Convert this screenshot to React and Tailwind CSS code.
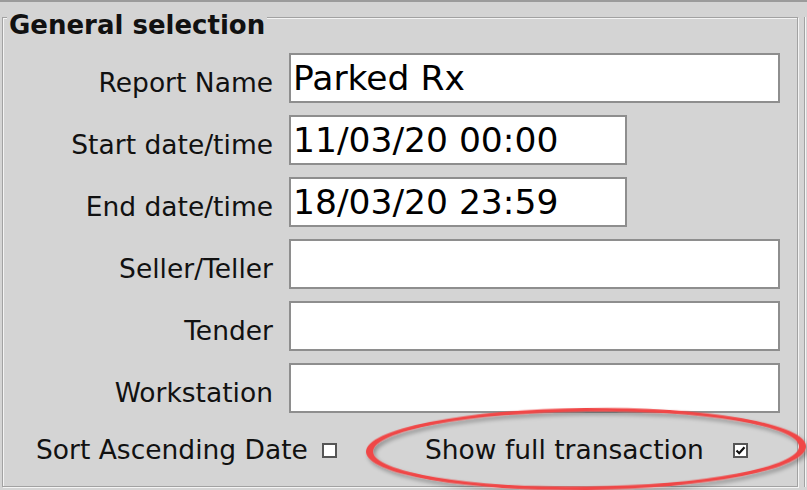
import React from 'react';

const rows = [
  { label: 'Report Name', value: 'Parked Rx', wide: true },
  { label: 'Start date/time', value: '11/03/20 00:00', wide: false },
  { label: 'End date/time', value: '18/03/20 23:59', wide: false },
  { label: 'Seller/Teller', value: '', wide: true },
  { label: 'Tender', value: '', wide: true },
  { label: 'Workstation', value: '', wide: true },
];

function Box({ checked }) {
  return (
    <span className="flex h-[15px] w-[15px] items-center justify-center border-2 border-[#555] bg-white">
      {checked && (
        <svg width="11" height="11" viewBox="0 0 11 11">
          <path d="M1.5 5.5 L4.2 8.2 L9.5 2.2" fill="none" stroke="#111" strokeWidth="2.2" />
        </svg>
      )}
    </span>
  );
}

export default function App() {
  return (
    <div className="relative flex h-[490px] w-[807px] overflow-hidden border-t-2 border-[#9b9b9b] bg-[#d4d4d4] font-['DejaVu_Sans',sans-serif] text-[#111]">
      <div className="relative ml-[2px] mt-[15px] h-[470px] w-[796px] border border-[#a2a2a2] shadow-[inset_1px_1px_0_#f4f4f4,1px_1px_0_#f4f4f4]">
        <div className="absolute left-[4px] top-[-8px] bg-[#d4d4d4] px-[2px] text-[26px] font-bold leading-[30px]">
          General selection
        </div>

        <div className="flex flex-col gap-[12px] pt-[35px]">
          {rows.map((r) => (
            <div key={r.label} className="flex items-center gap-[16px]">
              <span className="mt-[10px] w-[270px] text-right text-[26.5px] leading-[30px]">{r.label}</span>
              <div
                className={`flex h-[50px] items-center border-2 border-[#8e8e8e] bg-white pl-[2px] text-[34.5px] leading-[40px] text-black ${
                  r.wide ? 'w-[491px]' : 'w-[338px]'
                }`}
              >
                {r.value}
              </div>
            </div>
          ))}
        </div>

        <div className="mt-[22px] flex h-[30px] items-center pl-[33px]">
          <span className="w-[286px] text-[26.5px] leading-[30px]">Sort Ascending Date</span>
          <Box checked={false} />
          <span className="ml-[88px] w-[308px] text-[26.5px] leading-[30px]">Show full transaction</span>
          <Box checked={true} />
        </div>
      </div>
      <div className="ml-[6px] mt-[15px] h-[470px] w-[2px] border-l border-[#a2a2a2] bg-[#f4f4f4]" />

      <svg className="pointer-events-none absolute left-0 top-[-2px]" width="807" height="492" viewBox="0 0 807 492">
        <defs>
          <filter id="sh" x="-10%" y="-30%" width="120%" height="160%">
            <feDropShadow dx="2" dy="3" stdDeviation="2" floodColor="#000" floodOpacity="0.35" />
          </filter>
        </defs>
        <path
          transform="rotate(-0.7 586 449)"
          fillRule="evenodd"
          fill="#f04646"
          filter="url(#sh)"
          d="M366 449 a220 41 0 1 0 440 0 a220 41 0 1 0 -440 0 Z M373 449 a213 37.5 0 1 0 426 0 a213 37.5 0 1 0 -426 0 Z"
        />
      </svg>
    </div>
  );
}
